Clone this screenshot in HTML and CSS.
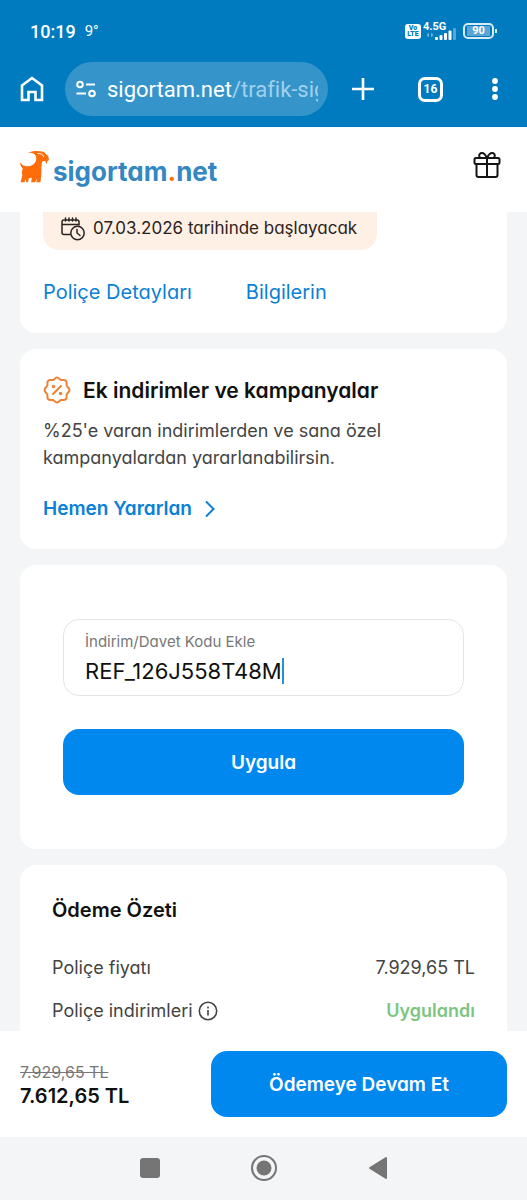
FILE: index.html
```html
<!DOCTYPE html>
<html lang="tr">
<head>
    <meta charset="UTF-8">
    <meta name="viewport" content="width=device-width, initial-scale=1.0">
    <title>Trafik Sigortası - sigortam.net</title>
    <link rel="stylesheet" href="styles.css">
</head>
<body>

    <!-- Durum çubuğu ve tarayıcı -->
    <div class="browser">
        <div class="status">
            <span class="clock">10:19</span>
            <span class="temp">9°</span>
            <div class="signals">
                <span class="volte"><span>Vo</span><span>LTE</span></span>
                <div class="network">
                    <span class="network-name">4.5G</span>
                    <svg width="34" height="12" viewBox="0 0 34 12">
                        <path d="M3.5 7 6 4.500v5zM10.500 7 8 4.500v5z" fill="#6fb2dc"/>
                        <g fill="#fff">
                            <rect x="12" y="9" width="3" height="3" rx="1"/>
                            <rect x="16.500" y="7" width="3" height="5" rx="1"/>
                            <rect x="21" y="5" width="3" height="7" rx="1"/>
                            <rect x="25.500" y="2.500" width="3" height="9.500" rx="1"/>
                        </g>
                        <rect x="30" y="0" width="3" height="12" rx="1" fill="#5aa5d5"/>
                    </svg>
                </div>
                <div class="battery"><span>90</span></div>
            </div>
        </div>
        <div class="toolbar">
            <button class="tool home" aria-label="Ana sayfa">
                <svg width="24" height="26" viewBox="0 0 24 26">
                    <path d="M2 9.500 12 2l10 7.500V24h-6.500v-8h-7v8H2z" fill="none" stroke="#fff" stroke-width="2.600"/>
                </svg>
            </button>
            <button class="address">
                <svg width="22" height="18" viewBox="0 0 22 18" fill="none" stroke="#fff" stroke-width="2">
                    <circle cx="5" cy="4.500" r="2.800"/>
                    <path d="M11 4.500h9M1.500 13.500H11"/>
                    <circle cx="17" cy="13.500" r="2.800"/>
                </svg>
                <span class="url">sigortam.net<span class="path">/trafik-sig</span></span>
            </button>
            <button class="tool plus" aria-label="Yeni sekme">
                <svg width="22" height="22" viewBox="0 0 22 22">
                    <path d="M11 0v22M0 11h22" stroke="#fff" stroke-width="2.600"/>
                </svg>
            </button>
            <button class="tool tabs" aria-label="Sekmeler">16</button>
            <button class="tool more" aria-label="Menü">
                <svg width="6" height="22" viewBox="0 0 6 22" fill="#fff">
                    <circle cx="3" cy="3" r="2.900"/>
                    <circle cx="3" cy="11" r="2.900"/>
                    <circle cx="3" cy="19" r="2.900"/>
                </svg>
            </button>
        </div>
    </div>

    <!-- Site başlığı -->
    <header class="header">
        <a href="#" class="logo">
            <svg width="30" height="33" viewBox="0 0 30 33">
                <path fill="#ff6c0a" d="M8 1.800C12-.3 19-.5 24 1l1.800 2 2.400 2 .8 4-1.800 1.200-.8 3-1.200-3.200-2.800.2c-.8 3-1 5.500-1 8.300 0 3.500-.2 7-.9 12.700h-4.300l.9-4-2.200 4h-3.800l.8-4.500-3 .5-.9 4H6.200l-.4-3.500L4.500 31.200H.6l1.700-7c-.8-2.600-.3-4.900.5-6.700C.7 15.500-.2 13.500.5 11.500c1 2 2.500 3 4.500 3.500 5 1 9-.8 10.700-4.500 1.200-3.300.3-6.500-1.900-7.800-1.700-.9-3.800-.9-5.800-.9z"/>
                <path d="M17 2.500c3-.2 6.200.6 6.800 3.500" fill="none" stroke="#fff" stroke-width=".9"/>
            </svg>
            <span class="logo-text">sigortam<span class="dot">.</span>net</span>
        </a>
        <button class="gift" aria-label="Kampanyalar">
            <svg width="28" height="28" viewBox="0 0 28 28" fill="none" stroke="#151515" stroke-width="2" stroke-linejoin="round">
                <rect x="1.500" y="7" width="25" height="6" rx="1.500"/>
                <path d="M3.500 13v11a2 2 0 0 0 2 2h17a2 2 0 0 0 2-2V13M14 7v19"/>
                <path d="M14 7C12 2.500 9.500 1.500 7.500 2.300 5.500 3.500 6 6 7.500 7M14 7c2-4.500 4.500-5.500 6.500-4.700 2 1.200 1.500 3.700 0 4.700"/>
            </svg>
        </button>
    </header>

    <main class="content">
        <section class="card policy">
            <div class="start-date">
                <svg width="24" height="24" viewBox="0 0 24 24" fill="none" stroke="#2a2320" stroke-width="1.500" stroke-linecap="round">
                    <path d="M9 17.500H3a2 2 0 0 1-2-2V5a2 2 0 0 1 2-2h13a2 2 0 0 1 2 2v3M1 7.500h17M4.500 1v3M8 1v3M11.500 1v3M15 1v3"/>
                    <circle cx="16.500" cy="16" r="6.700"/>
                    <path d="M16 12.500V16l3 2.500"/>
                </svg>
                <span>07.03.2026 tarihinde başlayacak</span>
            </div>
            <div class="links">
                <a href="#">Poliçe Detayları</a>
                <a href="#">Bilgilerin</a>
            </div>
        </section>

        <section class="card campaigns">
            <h2 class="campaign-title">
                <svg width="28" height="28" viewBox="0 0 28 28" fill="none" stroke="#ee8136" stroke-width="2" stroke-linejoin="round" stroke-linecap="round">
                    <path d="M14 1.500C16 1.500 16.500 3.700 18 4C19.500 4.200 21.500 3.200 22.800 4.700C24.200 6 23.300 7.900 23.700 9.500C24.200 11 26.500 12 26.500 14C26.500 16 24.200 17 23.700 18.500C23.300 20.100 24.200 22 22.800 23.300C21.500 24.700 19.500 23.700 18 24C16.500 24.400 16 26.500 14 26.500C12 26.500 11.500 24.400 10 24C8.500 23.700 6.500 24.700 5.200 23.300C3.800 22 4.700 20.100 4.300 18.500C3.800 17 1.500 16 1.500 14C1.500 12 3.800 11 4.300 9.500C4.700 7.900 3.800 6 5.200 4.700C6.500 3.200 8.500 4.200 10 4C11.500 3.700 12 1.500 14 1.500Z"/>
                    <path d="M10 18l8-8"/>
                    <circle cx="10.500" cy="10.500" r=".8"/>
                    <circle cx="17.500" cy="17.500" r=".8"/>
                </svg>
                Ek indirimler ve kampanyalar
            </h2>
            <p class="campaign-text">%25'e varan indirimlerden ve sana özel kampanyalardan yararlanabilirsin.</p>
            <a href="#" class="campaign-link">
                Hemen Yararlan
                <svg width="12" height="18" viewBox="0 0 12 18" fill="none" stroke="#0a80d8" stroke-width="2">
                    <path d="M2 1.500 9.500 9 2 16.500"/>
                </svg>
            </a>
        </section>

        <section class="card coupon">
            <div class="field">
                <label for="code">İndirim/Davet Kodu Ekle</label>
                <div class="field-row">
                    <input type="text" id="code" value="REF_126J558T48M">
                    <span class="caret"></span>
                </div>
            </div>
            <button class="btn">Uygula</button>
        </section>

        <section class="card summary">
            <h2>Ödeme Özeti</h2>
            <div class="row">
                <span>Poliçe fiyatı</span>
                <span>7.929,65 TL</span>
            </div>
            <div class="row">
                <span class="row-label">
                    Poliçe indirimleri
                    <svg width="20" height="20" viewBox="0 0 20 20" fill="none" stroke="#444" stroke-width="1.600">
                        <circle cx="10" cy="10" r="8.700"/>
                        <path d="M10 9v5.500M10 5.500v2"/>
                    </svg>
                </span>
                <span class="applied">Uygulandı</span>
            </div>
        </section>
    </main>

    <!-- Alt ödeme çubuğu -->
    <div class="pay-bar">
        <div class="prices">
            <s>7.929,65 TL</s>
            <strong>7.612,65 TL</strong>
        </div>
        <button class="btn">Ödemeye Devam Et</button>
    </div>

    <nav class="system-nav">
        <button aria-label="Son uygulamalar">
            <svg width="26" height="26" viewBox="0 0 26 26"><rect x="3" y="3" width="20" height="20" rx="3" fill="#757575"/></svg>
        </button>
        <button aria-label="Ana ekran">
            <svg width="26" height="26" viewBox="0 0 26 26">
                <circle cx="13" cy="13" r="12" fill="none" stroke="#757575" stroke-width="2"/>
                <circle cx="13" cy="13" r="7.500" fill="#757575"/>
            </svg>
        </button>
        <button aria-label="Geri">
            <svg width="26" height="26" viewBox="0 0 26 26"><path d="M5 13 21 3v20z" fill="#757575" stroke="#757575" stroke-width="2" stroke-linejoin="round"/></svg>
        </button>
    </nav>

</body>
</html>
```

FILE: styles.css
```css
* {
    box-sizing: border-box;
}

body {
    font-family: Inter, "Liberation Sans", sans-serif;
    font-feature-settings: "cv11";
    background-color: #f4f5f7;
    color: #444;
    font-size: 18px;
    line-height: 27px;
    margin: 0;
    min-height: 100vh;
    display: flex;
    flex-direction: column;
}

button {
    font: inherit;
    font-feature-settings: inherit;
    background: none;
    border: none;
    padding: 0;
    cursor: pointer;
}

a {
    color: #0a80d8;
    text-decoration: none;
}

h2,
p {
    margin: 0;
}

svg {
    display: block;
    flex-shrink: 0;
}

.card {
    background-color: #fff;
    border-radius: 16px;
}

.btn {
    background-color: #0088ee;
    color: #fff;
    font-size: 19px;
    font-weight: 600;
    height: 66px;
    border-radius: 16px;
}

/* Tarayıcı */
.browser {
    background-color: #007bbf;
    color: #fff;
    height: 127px;
    font-family: Roboto, sans-serif;
    font-feature-settings: normal;
}

.status {
    display: flex;
    align-items: center;
    padding: 18px 33px 0 30px;
    height: 44px;
}

.clock {
    font-size: 18px;
    font-weight: 500;
}

.temp {
    font-size: 15px;
    margin-left: 9px;
}

.signals {
    display: flex;
    align-items: center;
    gap: 6px;
    margin-left: auto;
}

.volte {
    display: flex;
    flex-direction: column;
    align-items: center;
    background-color: #fff;
    color: #007bbf;
    font-size: 7px;
    font-weight: 900;
    line-height: 6px;
    padding: 1px;
    border-radius: 3px;
    width: 16px;
    height: 15px;
}

.network {
    display: flex;
    flex-direction: column;
    margin-left: -4px;
}

.network-name {
    font-size: 11px;
    font-weight: 700;
    line-height: 8px;
    height: 5px;
}

.battery {
    display: flex;
    align-items: center;
    border: 2px solid #d8ecf8;
    border-radius: 5px;
    width: 31px;
    height: 16px;
    padding: 0 2px;
    position: relative;
}

.battery::after {
    content: "";
    position: absolute;
    right: -5px;
    top: 4px;
    width: 2px;
    height: 4px;
    background-color: #d8ecf8;
}

.battery span {
    flex: 1;
    background-color: #5aa5d5;
    font-size: 11px;
    font-weight: 700;
    line-height: 10px;
    text-align: center;
}

.toolbar {
    display: flex;
    align-items: center;
    padding: 18px 29px 0 20px;
}

.tool {
    color: #fff;
    flex-shrink: 0;
}

.address {
    flex: 1;
    min-width: 0;
    display: flex;
    align-items: center;
    gap: 10px;
    background-color: #3595cb;
    color: #fff;
    height: 54px;
    border-radius: 27px;
    padding: 0 10px;
    margin: 0 24px 0 21px;
}

.url {
    font-size: 22px;
    white-space: nowrap;
    overflow: hidden;
}

.path {
    color: #a0d0ec;
}

.tabs {
    border: 3px solid #fff;
    border-radius: 7px;
    width: 25px;
    height: 25px;
    margin: 0 49px 0 44px;
    font-size: 12px;
    font-weight: 700;
    line-height: 18px;
}

/* Site başlığı */
.header {
    background-color: #fff;
    display: flex;
    justify-content: space-between;
    height: 85px;
    padding: 24px 26px 0 20px;
}

.logo {
    display: flex;
    gap: 3px;
}

.logo-text {
    color: #3388c2;
    font-size: 26px;
    font-weight: 700;
    line-height: 42px;
}

.dot {
    color: #ff6c0a;
}

.gift {
    align-self: flex-start;
}

.content {
    flex: 1;
    display: flex;
    flex-direction: column;
    gap: 16px;
    padding: 0 20px;
}

/* Poliçe */
.policy {
    border-radius: 0 0 16px 16px;
    padding: 0 23px 27px;
}

.start-date {
    display: inline-flex;
    align-items: center;
    gap: 8px;
    background-color: #fff0e6;
    color: #2a2320;
    font-size: 17px;
    border-radius: 0 0 16px 16px;
    padding: 3px 20px 8px 18px;
}

.links {
    display: flex;
    gap: 54px;
    margin-top: 29px;
    font-size: 20px;
}

/* Kampanyalar */
.campaigns {
    padding: 27px 23px;
}

.campaign-title {
    display: flex;
    align-items: center;
    gap: 12px;
    color: #111;
    font-size: 21px;
    font-weight: 600;
}

.campaign-text {
    margin-top: 13px;
}

.campaign-link {
    display: flex;
    align-items: center;
    gap: 12px;
    margin-top: 24px;
    font-size: 19px;
    font-weight: 600;
}

/* Kupon kodu */
.coupon {
    display: flex;
    flex-direction: column;
    gap: 33px;
    padding: 54px 43px;
}

.field {
    border: 1px solid #e4e4e6;
    border-radius: 16px;
    padding: 12px 21px 7px;
}

.field label {
    display: block;
    color: #777;
    font-size: 15px;
    line-height: 20px;
    margin-bottom: 2px;
}

.field-row {
    display: flex;
    align-items: center;
    height: 34px;
}

.field input {
    field-sizing: content;
    font: inherit;
    font-size: 22px;
    color: #111;
    border: none;
    outline: none;
    padding: 0;
    background: none;
}

.caret {
    width: 2px;
    height: 26px;
    background-color: #2a8fd0;
}

/* Ödeme özeti */
.summary {
    flex: 1;
    border-radius: 16px 16px 0 0;
    padding: 32px 32px 7px;
}

.summary h2 {
    color: #111;
    font-size: 20px;
    font-weight: 600;
    margin-bottom: 30px;
}

.row {
    display: flex;
    justify-content: space-between;
}

.row + .row {
    margin-top: 16px;
}

.row-label {
    display: flex;
    align-items: center;
    gap: 5px;
}

.applied {
    color: #7cc67f;
    font-weight: 600;
}

.pay-bar {
    background-color: #fff;
    display: flex;
    justify-content: space-between;
    align-items: center;
    padding: 20px;
}

.pay-bar .btn {
    width: 296px;
}

.prices {
    display: flex;
    flex-direction: column;
    line-height: 24px;
}

.prices s {
    color: #777;
    font-size: 16px;
}

.prices strong {
    color: #111;
    font-size: 20px;
    font-weight: 600;
}

.system-nav {
    display: flex;
    justify-content: center;
    gap: 88px;
    padding: 18px 0 20px;
}
```
